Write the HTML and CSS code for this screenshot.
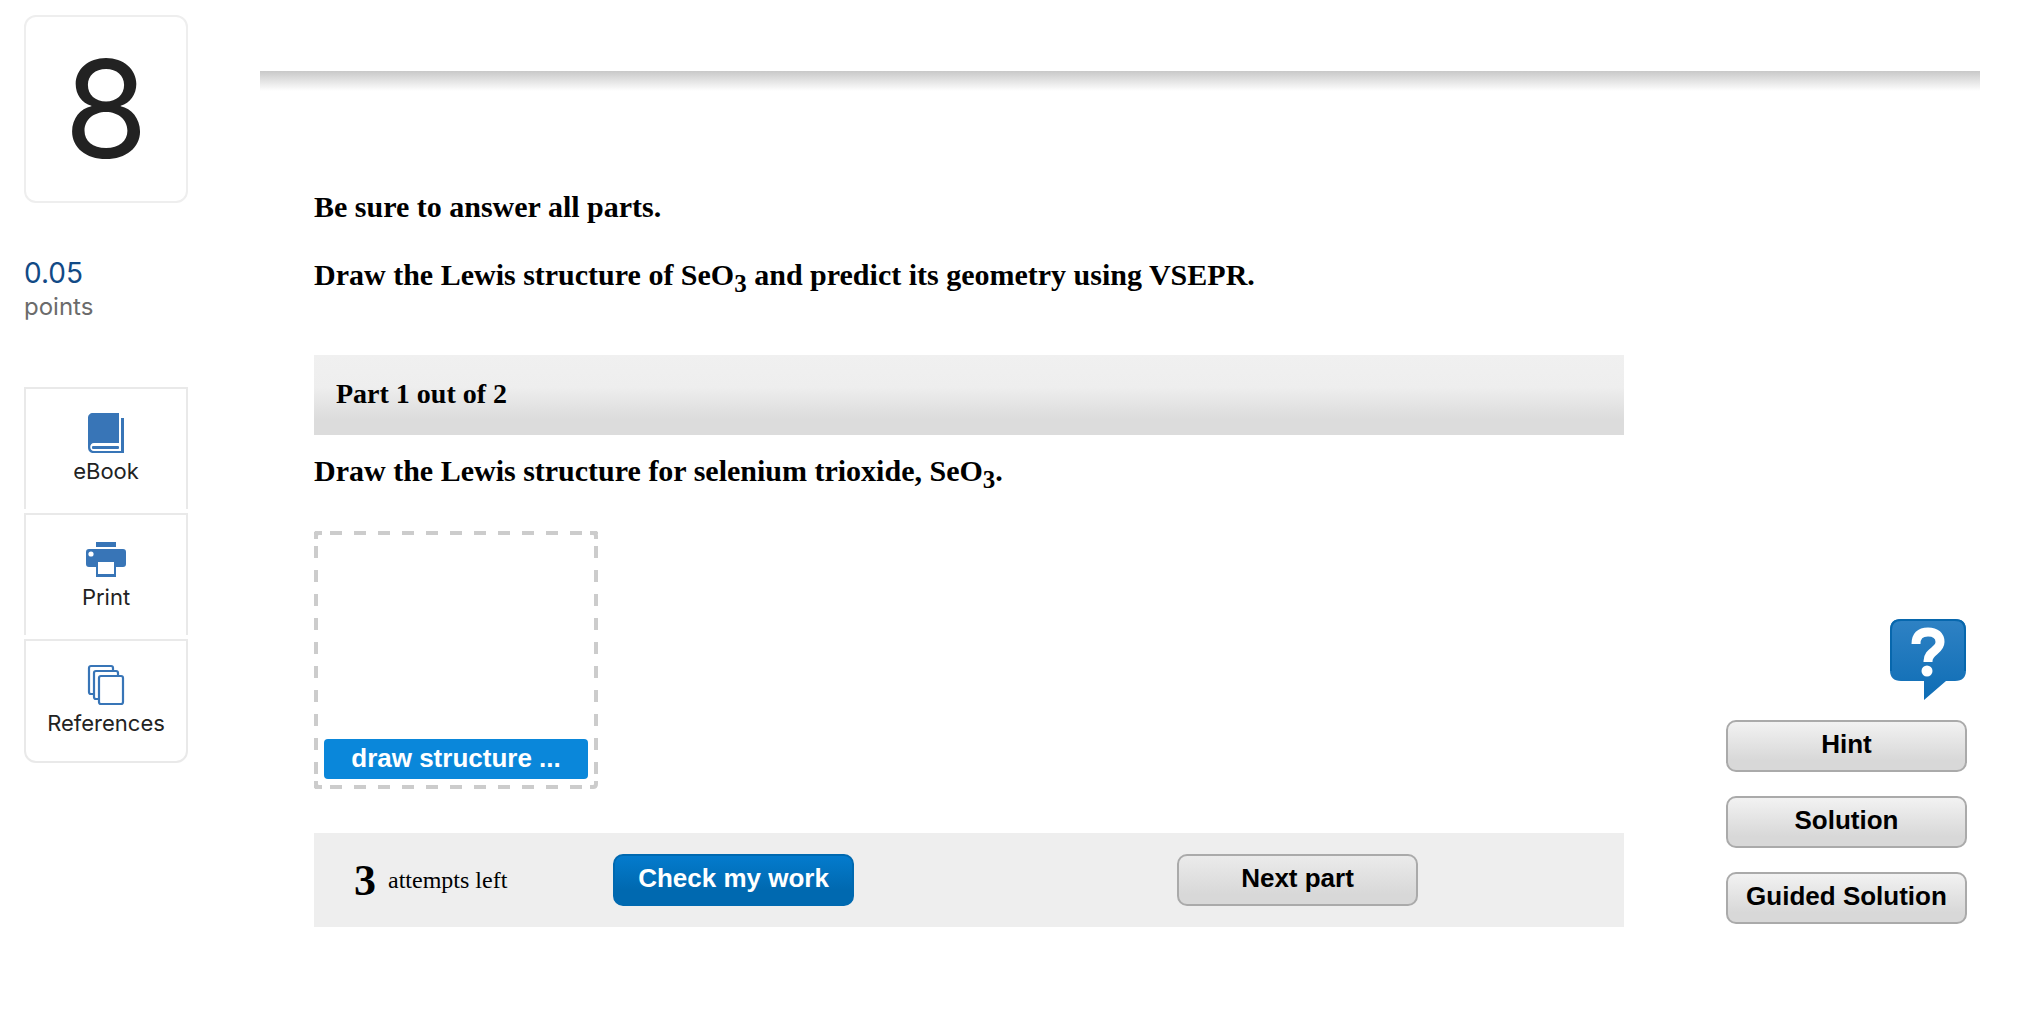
FILE: index.html
```
<!DOCTYPE html>
<html lang="en">
<head>
<meta charset="UTF-8">
<title>Question 8</title>
<link rel="stylesheet" href="styles.css">
</head>
<body>
<aside class="sidebar">
    <div class="number">8</div>
    <div class="points"><span class="score">0.05</span><span class="unit">points</span></div>
    <nav class="tools">
        <a class="tool" href="#ebook">
            <svg width="40" height="42" viewBox="0 0 40 42">
                <path fill="#3875b7" d="M7 1h26v30H8c-5 0-5 8 0 8h27V6h3v35H8c-4 0-6-2-6-6V6c0-3 2-5 5-5z"/>
                <rect x="6" y="34" width="27" height="3" rx="1" fill="#3875b7"/>
            </svg>
            eBook
        </a>
        <a class="tool" href="#print">
            <svg width="40" height="42" viewBox="0 0 40 42">
                <path fill="#3875b7" d="M10 4h20v5H10zM3 11h34q3 0 3 3v12q0 3-3 3h-7v10H10V29H3q-3 0-3-3V14q0-3 3-3z"/>
                <path fill="#fff" d="M12 24h16v12H12z"/>
                <circle cx="5" cy="16" r="2.6" fill="#fff"/>
            </svg>
            Print
        </a>
        <a class="tool" href="#references">
            <svg width="40" height="42" viewBox="0 0 40 42" fill="#fff" stroke="#3875b7" stroke-width="2.2">
                <rect x="3" y="2" width="24" height="28" rx="2"/>
                <rect x="8" y="7" width="24" height="28" rx="2"/>
                <rect x="13" y="12" width="24" height="28" rx="2"/>
            </svg>
            References
        </a>
    </nav>
</aside>
<main>
    <div class="shadow"></div>
    <div class="columns">
        <section class="question">
            <p>Be sure to answer all parts.</p>
            <p>Draw the Lewis structure of SeO<sub>3</sub> and predict its geometry using VSEPR.</p>
            <h2>Part 1 out of 2</h2>
            <p>Draw the Lewis structure for selenium trioxide, SeO<sub>3</sub>.</p>
            <div class="canvas">
                <svg class="dashes" viewBox="0 0 284 258" fill="none" stroke="#ccc" stroke-width="4">
                    <path stroke-dasharray="12" stroke-dashoffset="8" d="M0 2h276M0 256h276"/>
                    <path stroke-dasharray="12" stroke-dashoffset="9" d="M2 0v250M282 0v250"/>
                    <path fill="#fff" d="M8 2H5Q2 2 2 5v3M276 2h3q3 0 3 3v3M2 250v3q0 3 3 3h3M282 250v3q0 3-3 3h-3"/>
                    <path stroke="#fff" stroke-width="1" d="M0 1V0h1M283 0h1v1M0 257v1h1M283 258h1v-1"/>
                </svg>
                <button class="draw">draw structure ...</button>
            </div>
            <div class="actions">
                <div class="attempts"><b>3</b> attempts left</div>
                <button class="btn primary">Check my work</button>
                <button class="btn next">Next part</button>
            </div>
        </section>
        <aside class="help">
            <a href="#help" class="help-icon" aria-label="Help">
                <svg width="76" height="82" viewBox="0 0 76 82">
                    <defs>
                        <linearGradient id="blue" x1="0" y1="0" x2="0" y2="1">
                            <stop offset="0" stop-color="#2f82c4"/>
                            <stop offset="1" stop-color="#0e6db5"/>
                        </linearGradient>
                    </defs>
                    <path fill="url(#blue)" d="M11 0h54q11 0 11 11v40q0 11-11 11h-9L34 81V62H11Q0 62 0 51V11Q0 0 11 0z"/>
                    <path fill="none" stroke="#0767ad" stroke-width="2" d="M1 52V11Q1 1 11 1h54q10 0 10 10v41"/>
                    <path fill="none" stroke="#fff" stroke-width="9" d="M26 25c0-8 4-12 12-12s12 4 12 10c0 9-12 9-12 19v1"/>
                    <circle cx="37" cy="52" r="5.5" fill="#fff"/>
                </svg>
            </a>
            <button class="btn">Hint</button>
            <button class="btn">Solution</button>
            <button class="btn">Guided Solution</button>
        </aside>
    </div>
</main>
</body>
</html>
```
FILE: styles.css
```
* {
    box-sizing: border-box;
}
body {
    margin: 0;
    display: flex;
    background: #fff;
    color: #000;
    font-family: "Liberation Serif", "Times New Roman", serif;
}
button {
    font-family: "Liberation Sans", Arial, sans-serif;
    font-size: 26px;
    font-weight: bold;
    cursor: pointer;
}

/* left column */
.sidebar {
    flex: none;
    width: 164px;
    margin: 15px 72px 0 24px;
    font-family: Inter, sans-serif;
    color: #222;
}
.number {
    height: 188px;
    border: 2px solid #eee;
    border-radius: 12px;
    font-size: 136px;
    line-height: 184px;
    text-align: center;
}
.points {
    display: flex;
    flex-direction: column;
    margin-top: 52px;
}
.score {
    font-size: 28px;
    line-height: 36px;
    color: #124a86;
}
.unit {
    font-size: 24px;
    line-height: 32px;
    color: #6b6b6b;
}
.tools {
    display: flex;
    flex-direction: column;
    gap: 4px;
    margin-top: 64px;
}
.tool {
    display: flex;
    flex-direction: column;
    align-items: center;
    height: 122px;
    padding-top: 23px;
    border: 2px solid #e9e9e9;
    border-bottom: 0;
    color: #222;
    font-size: 22px;
    line-height: 34px;
    text-decoration: none;
}
.tool:last-child {
    height: 124px;
    border-bottom: 2px solid #e9e9e9;
    border-radius: 0 0 12px 12px;
}

/* question */
main {
    flex: 1;
    margin: 71px 52px 0 0;
}
.shadow {
    height: 20px;
    background: linear-gradient(#c8c8c8, #fff);
}
.columns {
    display: flex;
    gap: 102px;
    padding: 99px 13px 0 54px;
}
.question {
    flex: 1;
}
.question p {
    margin: 0 0 34px;
    font-size: 30px;
    font-weight: bold;
    line-height: 34px;
}
sub {
    line-height: 0;
}
h2 {
    margin: 63px 0 19px;
    padding: 0 22px 2px;
    font-size: 28px;
    line-height: 78px;
    background: linear-gradient(#f0f0f0 0%, #eee 40%, #dcdcdc 80%, #dcdcdc 100%);
}
.canvas {
    position: relative;
    display: flex;
    align-items: flex-end;
    width: 284px;
    height: 258px;
    margin-top: 43px;
    padding: 10px;
}
.dashes {
    position: absolute;
    inset: 0;
}
.draw {
    position: relative;
    width: 100%;
    height: 40px;
    padding: 0 0 2px;
    border: 0;
    border-radius: 4px;
    background: #0a87da;
    color: #fff;
}
.actions {
    display: flex;
    align-items: center;
    height: 94px;
    margin-top: 44px;
    padding: 0 206px 0 40px;
    background: #eee;
}
.attempts {
    display: flex;
    align-items: center;
    gap: 12px;
    width: 259px;
    font-size: 24px;
}
.attempts b {
    font-size: 44px;
}
.btn {
    flex: none;
    width: 241px;
    height: 52px;
    padding: 0 0 4px;
    border: 2px solid #aaa;
    border-radius: 10px;
    background: linear-gradient(#f2f2f2, #d8d8d8 80%);
    color: #000;
}
.primary {
    border-color: #0069b0;
    background: linear-gradient(#047bcd, #0069b0 70%);
    color: #fff;
}
.next {
    margin-left: auto;
    background: linear-gradient(#ebebeb, #d8d8d8 80%);
}

/* right column */
.help {
    display: flex;
    flex-direction: column;
    justify-content: flex-end;
    gap: 24px;
    padding-bottom: 3px;
}
.help-icon {
    align-self: flex-end;
    height: 77px;
    margin-right: 1px;
}
```
